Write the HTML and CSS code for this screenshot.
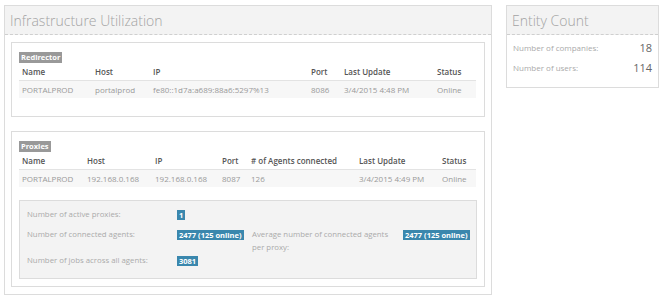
FILE: index.html
```html
<!DOCTYPE html>
<html lang="en">
<head>
  <meta charset="UTF-8" />
  <title>Infrastructure Utilization</title>
  <link rel="stylesheet" href="styles.css">
</head>
<body>
  <div class="layout">
    <div class="panel infra">
      <div class="panel-head">Infrastructure Utilization</div>
      <div class="panel-body">

        <div class="box">
          <span class="label">Redirector</span>
          <table class="grid">
            <colgroup>
              <col style="width:73px"><col style="width:58px"><col style="width:158px">
              <col style="width:33px"><col style="width:93px"><col style="width:42px">
            </colgroup>
            <thead>
              <tr><th>Name</th><th>Host</th><th>IP</th><th>Port</th><th>Last Update</th><th>Status</th></tr>
            </thead>
            <tbody>
              <tr><td>PORTALPROD</td><td>portalprod</td><td>fe80::1d7a:a689:88a6:5297%13</td><td>8086</td><td>3/4/2015 4:48 PM</td><td>Online</td></tr>
            </tbody>
          </table>
        </div>

        <div class="box">
          <span class="label">Proxies</span>
          <table class="grid">
            <colgroup>
              <col style="width:65px"><col style="width:68px"><col style="width:67px"><col style="width:29px">
              <col style="width:108px"><col style="width:83px"><col style="width:37px">
            </colgroup>
            <thead>
              <tr><th>Name</th><th>Host</th><th>IP</th><th>Port</th><th># of Agents connected</th><th>Last Update</th><th>Status</th></tr>
            </thead>
            <tbody>
              <tr><td>PORTALPROD</td><td>192.168.0.168</td><td>192.168.0.168</td><td>8087</td><td>126</td><td>3/4/2015 4:49 PM</td><td>Online</td></tr>
            </tbody>
          </table>

          <div class="stats">
            <div class="stat-label">Number of active proxies:</div>
            <div><span class="label info">1</span></div>
            <div></div>
            <div></div>

            <div class="stat-label">Number of connected agents:</div>
            <div><span class="label info">2477 (125 online)</span></div>
            <div class="stat-label">Average number of connected agents per proxy:</div>
            <div><span class="label info">2477 (125 online)</span></div>

            <div class="stat-label">Number of jobs across all agents:</div>
            <div><span class="label info">3081</span></div>
            <div></div>
            <div></div>
          </div>
        </div>

      </div>
    </div>

    <div class="panel entity">
      <div class="panel-head">Entity Count</div>
      <div class="panel-body counts">
        <div class="count-row"><span>Number of companies:</span><span class="count">18</span></div>
        <div class="count-row"><span>Number of users:</span><span class="count">114</span></div>
      </div>
    </div>
  </div>
</body>
</html>
```

FILE: styles.css
```css
* {
  box-sizing: border-box;
  margin: 0;
  padding: 0;
}

body {
  margin: 5px 4px;
  background: #ffffff;
  font-family: "Open Sans", "Liberation Sans", sans-serif;
  color: #999;
  font-size: 8px;
}

.layout {
  display: flex;
  align-items: flex-start;
  gap: 14px;
}

.panel {
  border: 1px solid #dcdcdc;
  background: #fff;
}

.infra {
  width: 488px;
}

.entity {
  width: 153px;
}

.panel-head {
  height: 29px;
  background: #f3f3f3;
  border-bottom: 1px dashed #cfcfcf;
  padding: 5px 5px 0;
  font-size: 14px;
  font-weight: 300;
  color: #a3a3a3;
  line-height: 20px;
}

.panel-body {
  padding: 7px 6px 7px;
}

.box {
  border: 1px solid #dcdcdc;
  padding: 9px 7px 7px;
}

.box + .box {
  margin-top: 14px;
}

.label {
  display: inline-block;
  background: #999;
  color: #fff;
  font-weight: 700;
  font-size: 7.5px;
  line-height: 11px;
  padding: 0 2px;
  vertical-align: top;
  white-space: nowrap;
}

.label.info {
  background: #3a87ad;
  line-height: 10px;
}

.grid {
  border-collapse: collapse;
  table-layout: fixed;
  width: 457px;
  margin-bottom: 11px;
}

.grid th {
  text-align: left;
  font-weight: 600;
  color: #555;
  height: 17px;
  padding: 0 3px;
  border-bottom: 1px solid #e3e3e3;
  white-space: nowrap;
}

.grid td {
  background: #f7f7f7;
  height: 18px;
  padding: 0 3px;
  white-space: nowrap;
}

.box .stats {
  margin-top: 13px;
}

.stats {
  background: #f3f3f3;
  border: 1px solid #dcdcdc;
  padding: 7px 7px 11px;
  display: grid;
  grid-template-columns: 150px 75px 151px 1fr;
  grid-template-rows: 20px 26px auto;
  line-height: 13px;
}

.stat-label {
  color: #aaa;
  font-size: 7.8px;
  padding-right: 10px;
}

.stats .label {
  margin-top: 2px;
}

.counts {
  padding: 2px 6px 10px;
}

.count-row {
  display: flex;
  justify-content: space-between;
  align-items: center;
  height: 20px;
  color: #aaa;
}

.count {
  font-size: 11px;
  color: #666;
}
```
